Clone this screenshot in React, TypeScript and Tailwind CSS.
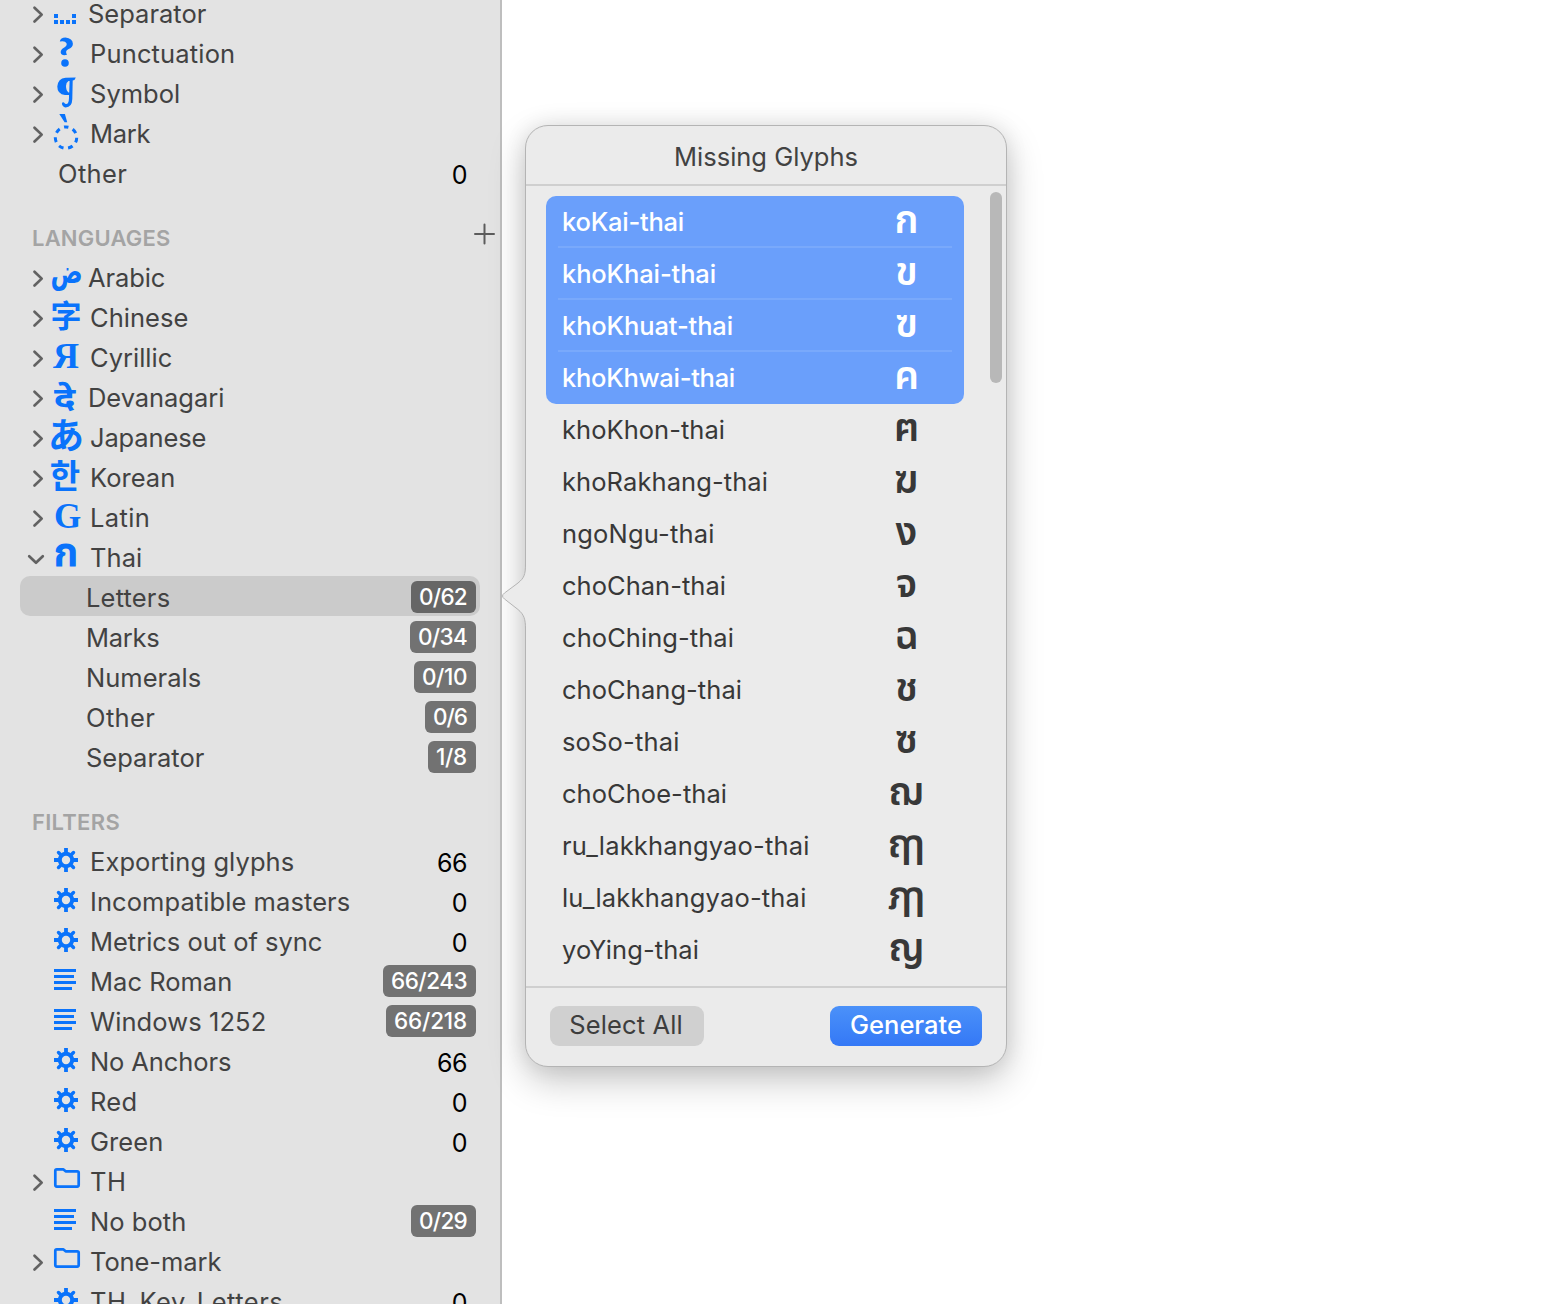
import React, { useLayoutEffect, useRef, useState } from "react";

type IconKind =
  | "space" | "mark" | "gear" | "list" | "folder" | "question" | "pilcrow"
  | "arabic" | "chinese" | "cyrillic" | "devanagari" | "japanese" | "korean" | "latin" | "thai";

type Row = {
  label: string;
  w: number;
  x?: number;
  icon?: IconKind;
  chevron?: "right" | "down";
  count?: string;
  badge?: string;
  bw?: number;
  selected?: boolean;
};

function FitText({ text, width, className = "" }: { text: string; width: number; className?: string }) {
  const ref = useRef<HTMLSpanElement>(null);
  const [spacing, setSpacing] = useState(0);
  useLayoutEffect(() => {
    const el = ref.current;
    if (!el) return;
    el.style.letterSpacing = "0px";
    setSpacing((width - el.getBoundingClientRect().width) / text.length);
  }, [text, width]);
  return (
    <span ref={ref} className={"inline-block whitespace-nowrap " + className} style={{ letterSpacing: spacing + "px" }}>
      {text}
    </span>
  );
}

function Chevron({ dir }: { dir: "right" | "down" }) {
  return dir === "right" ? (
    <svg className="absolute left-[31px] top-[13px]" width="14" height="20" viewBox="0 0 14 20" fill="none" stroke="#626262" strokeWidth="2.7" strokeLinecap="round" strokeLinejoin="round">
      <path d="M3.5 2.7 10.7 9.600 3.5 16.5" />
    </svg>
  ) : (
    <svg className="absolute left-[26px] top-[17px]" width="20" height="14" viewBox="0 0 20 14" fill="none" stroke="#626262" strokeWidth="2.7" strokeLinecap="round" strokeLinejoin="round">
      <path d="M3.2 3.2 10 9.8 16.8 3.2" />
    </svg>
  );
}

const glyphs: Partial<Record<IconKind, { ch: string; cls: string }>> = {
  arabic: { ch: "ض", cls: "font-['DejaVu_Sans'] font-bold text-[26px] top-[-4px] scale-x-[0.92] scale-y-[1.25]" },
  chinese: { ch: "字", cls: "font-['Noto_Sans_CJK_SC',sans-serif] font-bold text-[31px] top-[-2px]" },
  cyrillic: { ch: "Я", cls: "font-['Liberation_Serif'] font-bold text-[36px] top-[-0.5px]" },
  devanagari: { ch: "दे", cls: "font-['Noto_Sans',sans-serif] font-bold text-[31px] top-[1px] left-[-1px] scale-x-[1.22]" },
  japanese: { ch: "あ", cls: "font-['Noto_Sans_CJK_JP',sans-serif] font-bold text-[36px] top-[-3px]" },
  korean: { ch: "한", cls: "font-['Noto_Sans_CJK_KR',sans-serif] font-bold text-[33px] top-[-2px] left-[-1px]" },
  latin: { ch: "G", cls: "font-['Liberation_Serif'] font-bold text-[35px] top-[1px] left-[1.5px]" },
  thai: { ch: "ก", cls: "font-['Noto_Sans_Thai','Noto_Sans',sans-serif] font-bold text-[40px] top-[-2px]" },
};

function Icon({ kind }: { kind: IconKind }) {
  const g = glyphs[kind];
  if (g) {
    return (
      <span className="absolute left-[46px] top-0 flex h-10 w-10 items-center justify-center text-[#0a73fb]">
        <span className={"relative whitespace-nowrap leading-[40px] " + g.cls}>{g.ch}</span>
      </span>
    );
  }
  return (
    <svg className="absolute left-[46px] top-0 overflow-visible" width="40" height="40" viewBox="0 0 40 40" fill="#0a73fb">
      {kind === "space" && (
        <path d="M8 22h4v4H8zM26 22h4v4h-4zM8 28h4v4H8zM14 28h4v4h-4zM20 28h4v4h-4zM26 28h4v4h-4z" />
      )}
      {kind === "question" && (
        <>
          <path d="M13.8 9.600Q14.500 5.600 19.500 5.600Q26.600 6.300 26.900 11.700Q26.900 15.300 22.200 17.200Q18.700 18.900 21 22.800Q15.400 24.200 14.700 20.500Q14.500 17.500 18.300 15.500Q21.400 13.700 20.500 11.300Q19.300 8.600 13.800 9.600z" />
          <circle cx="19" cy="31" r="3.8" />
        </>
      )}
      {kind === "pilcrow" && (
        <path fillRule="evenodd" d="M29.800 5.400Q29 8.200 26.700 8.600L26.300 27Q26 35.500 19.500 35.400Q16.200 34.800 15.900 31.500Q16.300 29.700 18 30.400Q19.800 33 21.900 31.200Q23 29.500 23 26V23H19Q11.300 22.200 11.300 14.500Q12 6.500 19.500 5.800zM23.600 9H22.500Q20 10.500 20 14Q20 18.500 22.500 20.500H23.200z" />
      )}
      {kind === "mark" && (
        <>
          <path d="M13.3 2h5.6l2.3 8.2h-2.6z" />
          <circle cx="20" cy="25.600" r="10.7" fill="none" stroke="#0a73fb" strokeWidth="3" strokeDasharray="4.9 4.704" strokeDashoffset="2.45" transform="rotate(-90 20 25.6)" />
        </>
      )}
      {kind === "gear" && (
        <>
          <circle cx="20" cy="20" r="6.2" fill="none" stroke="#0a73fb" strokeWidth="4" />
          <g stroke="#0a73fb" strokeWidth="3.8">
            <path d="M20 8v5M20 27v5M8 20h5M27 20h5" />
            <path d="M12.500 12.500l2 2M25.500 25.500l2 2M27.500 12.500l-2 2M14.500 25.500l-2 2" strokeLinecap="round" strokeWidth="3.400" />
          </g>
        </>
      )}
      {kind === "list" && <path d="M8 9h22v3H8zM8 15h20v3H8zM8 21h22v3H8zM8 27h18v3H8z" />}
      {kind === "folder" && (
        <path d="M9.3 24.8V10.8q0-1.5 1.5-1.5h6.4l2.4 2h11.6q1.5 0 1.500 1.5v12q0 1.8-1.5 1.8H10.8q-1.5 0-1.5-1.8z" fill="none" stroke="#0a73fb" strokeWidth="2.7" strokeLinejoin="round" />
      )}
    </svg>
  );
}

function SideRow({ row }: { row: Row }) {
  return (
    <div className="relative flex h-10 shrink-0 items-center">
      {row.selected && <div className="absolute inset-y-0 left-5 right-5 rounded-[10px] bg-[#cbcbcb]" />}
      {row.chevron && <Chevron dir={row.chevron} />}
      {row.icon && <Icon kind={row.icon} />}
      <div className="relative flex-1 pt-[4px] text-[#424242]" style={{ paddingLeft: row.x ?? 90 }}>
        <FitText text={row.label} width={row.w - 0.7} className="text-[25.5px] font-[430] leading-[36px]" />
      </div>
      {row.count && <div className="relative pr-[33px] pt-[6px] text-[25px] font-[430] leading-[34px] tracking-[-0.5px] text-black">{row.count}</div>}
      {row.badge && (
        <div className={"relative mr-6 mt-[2px] flex h-8 items-center justify-center rounded-[6px] text-[22.5px] font-medium text-white " + (row.selected ? "bg-[#666666]" : "bg-[#727272]")} style={{ width: row.bw }}>
          <FitText text={row.badge} width={(row.bw ?? 60) - 17} className="relative left-[-0.5px]" />
        </div>
      )}
    </div>
  );
}

const categories: Row[] = [
  { label: "Separator", w: 119, x: 88, icon: "space", chevron: "right" },
  { label: "Punctuation", w: 146, icon: "question", chevron: "right" },
  { label: "Symbol", w: 91, icon: "pilcrow", chevron: "right" },
  { label: "Mark", w: 61, icon: "mark", chevron: "right" },
  { label: "Other", w: 70, x: 58, count: "0" },
];

const languages: Row[] = [
  { label: "Arabic", w: 78, x: 88, icon: "arabic", chevron: "right" },
  { label: "Chinese", w: 99, icon: "chinese", chevron: "right" },
  { label: "Cyrillic", w: 83, icon: "cyrillic", chevron: "right" },
  { label: "Devanagari", w: 137, x: 88, icon: "devanagari", chevron: "right" },
  { label: "Japanese", w: 117, icon: "japanese", chevron: "right" },
  { label: "Korean", w: 86, icon: "korean", chevron: "right" },
  { label: "Latin", w: 61, icon: "latin", chevron: "right" },
  { label: "Thai", w: 53, icon: "thai", chevron: "down" },
  { label: "Letters", w: 85, x: 86, badge: "0/62", bw: 65, selected: true },
  { label: "Marks", w: 74, x: 86, badge: "0/34", bw: 66 },
  { label: "Numerals", w: 116, x: 86, badge: "0/10", bw: 62 },
  { label: "Other", w: 70, x: 86, badge: "0/6", bw: 51 },
  { label: "Separator", w: 119, x: 86, badge: "1/8", bw: 48 },
];

const filters: Row[] = [
  { label: "Exporting glyphs", w: 205, icon: "gear", count: "66" },
  { label: "Incompatible masters", w: 261, icon: "gear", count: "0" },
  { label: "Metrics out of sync", w: 233, icon: "gear", count: "0" },
  { label: "Mac Roman", w: 143, icon: "list", badge: "66/243", bw: 93 },
  { label: "Windows 1252", w: 177, icon: "list", badge: "66/218", bw: 90 },
  { label: "No Anchors", w: 142, icon: "gear", count: "66" },
  { label: "Red", w: 48, icon: "gear", count: "0" },
  { label: "Green", w: 74, icon: "gear", count: "0" },
  { label: "TH", w: 37, icon: "folder", chevron: "right" },
  { label: "No both", w: 97, icon: "list", badge: "0/29", bw: 65 },
  { label: "Tone-mark", w: 132, icon: "folder", chevron: "right" },
  { label: "TH_Key_Letters", w: 194, icon: "gear", count: "0" },
];

const missing: { name: string; w: number; ch: string }[] = [
  { name: "koKai-thai", w: 122, ch: "ก" },
  { name: "khoKhai-thai", w: 154, ch: "ข" },
  { name: "khoKhuat-thai", w: 171, ch: "ฃ" },
  { name: "khoKhwai-thai", w: 173, ch: "ค" },
  { name: "khoKhon-thai", w: 163, ch: "ฅ" },
  { name: "khoRakhang-thai", w: 206, ch: "ฆ" },
  { name: "ngoNgu-thai", w: 152.5, ch: "ง" },
  { name: "choChan-thai", w: 164, ch: "จ" },
  { name: "choChing-thai", w: 172, ch: "ฉ" },
  { name: "choChang-thai", w: 180, ch: "ช" },
  { name: "soSo-thai", w: 117.5, ch: "ซ" },
  { name: "choChoe-thai", w: 165, ch: "ฌ" },
  { name: "ru_lakkhangyao-thai", w: 247.5, ch: "ฤๅ" },
  { name: "lu_lakkhangyao-thai", w: 244.5, ch: "ฦๅ" },
  { name: "yoYing-thai", w: 137, ch: "ญ" },
];

function Heading({ text, w, plus }: { text: string; w: number; plus?: boolean }) {
  return (
    <div className="flex h-16 shrink-0 items-end justify-between pb-[2px] pl-8 pr-[5px]">
      <FitText text={text} width={w} className="text-[22px] font-semibold leading-[32px] text-[#a4a4a4]" />
      {plus && (
        <svg className="mb-[9px]" width="22" height="22" viewBox="0 0 22 22" stroke="#5c5c5c" strokeWidth="2" strokeLinecap="round">
          <path d="M11.500 1.500v19M2 11h19" />
        </svg>
      )}
    </div>
  );
}

function Popover() {
  return (
    <section className="absolute left-[525px] top-[125px] h-[942px] w-[482px] rounded-[23px] border border-[#b4b4b4] bg-[#ebebeb] shadow-[0_14px_36px_rgba(0,0,0,0.22),0_0_22px_rgba(0,0,0,0.09)]">
      <svg className="absolute left-[-26px] top-[435px]" width="28" height="72" viewBox="-1 0 28 72" fill="#ebebeb">
        <path d="M27 3H24.500C24.500 14 23 17 17 22L3.500 32Q0 35 3.500 38L17 48.500C23 53.500 24.500 58 24.500 68H27z" />
        <path d="M24.500 3C24.500 14 23 17 17 22L3.500 32Q-.5 35 3.500 38L17 48.500C23 53.500 24.500 58 24.500 68" fill="none" stroke="#b4b4b4" />
      </svg>
      <div className="flex h-full flex-col">
        <header className="flex h-[60px] shrink-0 items-center justify-center border-b-2 border-[#cfcfcf] pt-[5px] text-[25.5px] font-[430] text-[#424242]">
          <FitText text="Missing Glyphs" width={184} />
        </header>
        <div className="relative h-[802px] shrink-0 border-b-2 border-[#cfcfcf] pl-5 pt-[10px]">
          <ul className="w-[418px]">
            {missing.map((m, i) => {
              const on = i < 4;
              return (
                <li
                  key={m.name}
                  className={
                    "relative flex h-[52px] items-center pl-4 " +
                    (on ? "bg-[#6a9ffb] text-white " : "text-[#383838] ") +
                    (i === 0 ? "rounded-t-[10px] " : "") +
                    (i === 3 ? "rounded-b-[10px]" : "")
                  }
                >
                  <FitText text={m.name} width={m.w} className={"text-[25.5px] leading-[50px] " + (on ? "font-medium" : "font-[430]")} />
                  <span className="absolute left-[310px] top-0 w-[101px] text-center font-['Noto_Sans_Thai','Noto_Sans',sans-serif] text-[39px] font-semibold leading-[52px]">
                    {m.ch}
                  </span>
                  {i < 3 && <i className="absolute bottom-0 left-3 right-3 h-[2px] bg-[#79a9fb]" />}
                </li>
              );
            })}
          </ul>
          <div className="absolute right-[4px] top-[6px] h-[191px] w-3 rounded-full bg-[#b8b8b8]" />
        </div>
        <footer className="flex items-start justify-between px-6 pt-[18px] text-[25.5px]">
          <button className="flex h-10 w-[154px] items-center justify-center rounded-[9px] bg-[#d0d0d0] font-[430] text-[#3d3d3d]">
            <FitText text="Select All" width={113.5} className="relative left-[-1px] top-[-1px]" />
          </button>
          <button className="flex h-10 w-[152px] items-center justify-center rounded-[9px] bg-linear-to-b from-[#4b91f9] to-[#3478f6] font-medium text-white">
            <FitText text="Generate" width={112} className="relative top-[-1px]" />
          </button>
        </footer>
      </div>
    </section>
  );
}

export default function App() {
  return (
    <main className="relative h-[1304px] w-[1558px] overflow-hidden bg-white font-['Inter',sans-serif]">
      <aside className="h-full w-[502px] overflow-hidden border-r-2 border-[#bebebe] bg-[#e3e3e3]">
        <div className="-mt-2 flex flex-col">
          {categories.map((r) => <SideRow key={r.label} row={r} />)}
          <Heading text="LANGUAGES" w={138.5} plus />
          {languages.map((r) => <SideRow key={r.label} row={r} />)}
          <Heading text="FILTERS" w={88} />
          {filters.map((r) => <SideRow key={r.label} row={r} />)}
        </div>
      </aside>
      <Popover />
    </main>
  );
}
